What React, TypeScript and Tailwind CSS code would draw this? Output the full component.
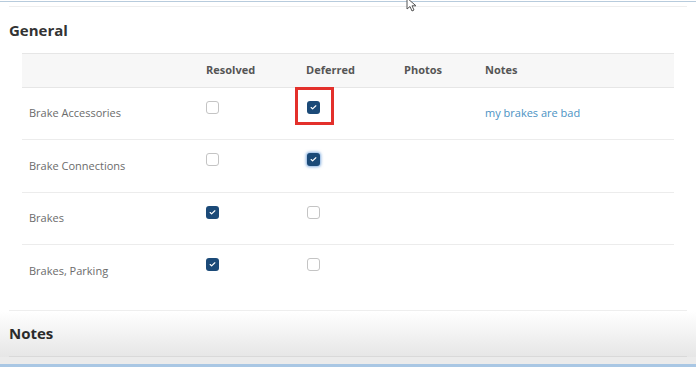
import { Check } from 'lucide-react';

type Row = {
  name: string;
  resolved: boolean;
  deferred: boolean;
  note?: string;
  focus?: boolean;
  marked?: boolean;
  h: string;
};

const rows: Row[] = [
  { name: 'Brake Accessories', resolved: false, deferred: true, note: 'my brakes are bad', marked: true, h: 'h-[52px]' },
  { name: 'Brake Connections', resolved: false, deferred: true, focus: true, h: 'h-[53px]' },
  { name: 'Brakes', resolved: true, deferred: false, h: 'h-[52px]' },
  { name: 'Brakes, Parking', resolved: true, deferred: false, h: 'h-[52px]' },
];

function Box({ checked, focus }: { checked: boolean; focus?: boolean }) {
  if (checked) {
    return (
      <div
        className={`w-[13px] h-[13px] rounded-[3px] bg-[#1b4a78] flex items-center justify-center ${
          focus ? 'shadow-[0_0_3px_1px_rgba(80,140,210,0.7)]' : ''
        }`}
      >
        <Check className="w-[7px] h-[7px] text-white" strokeWidth={4} />
      </div>
    );
  }
  return <div className="w-[13px] h-[13px] rounded-[3px] border border-[#c4c4c4] bg-white" />;
}

export default function App() {
  return (
    <div
      className="relative w-[696px] h-[367px] overflow-hidden bg-white flex flex-col"
      style={{ fontFamily: '"Open Sans", "Liberation Sans", sans-serif' }}
    >
      <div className="mt-px h-[1px] bg-[#b7cbdc]" />

      <div className="mx-[9px] mt-[4px] border-t border-[#eeeeee] border-b pb-[13px]">
        <h2 className="pt-[13px] text-[15px] leading-[20px] font-bold text-[#333]">General</h2>

        <div className="ml-[13px] mr-[13px] mt-[13px]">
          <div className="grid grid-cols-[177px_100px_98px_81px_1fr] h-[35px] items-center bg-[#f7f7f7] border-y border-[#e6e6e6] text-[11px] font-bold text-[#555]">
            <div />
            <div className="pl-[7px]">Resolved</div>
            <div className="pl-[7px]">Deferred</div>
            <div className="pl-[7px]">Photos</div>
            <div className="pl-[7px]">Notes</div>
          </div>

          {rows.map((r, i) => (
            <div
              key={r.name}
              className={`grid grid-cols-[177px_100px_98px_81px_1fr] ${r.h} text-[11px] ${
                i < rows.length - 1 ? 'border-b border-[#ececec]' : ''
              }`}
            >
              <div className="pl-[7px] flex items-center text-[#6b6b6b]">{r.name}</div>
              <div className="pl-[7px] pt-[13px]">
                <Box checked={r.resolved} />
              </div>
              <div className="pl-[8px] pt-[13px] relative">
                <Box checked={r.deferred} focus={r.focus} />
                {r.marked && (
                  <div className="absolute left-[-4px] top-[-1px] w-[39px] h-[38px] border-[3px] border-[#e3302b]" />
                )}
              </div>
              <div />
              <div className="pl-[7px] flex items-center text-[#4b92c3]">{r.note}</div>
            </div>
          ))}
        </div>
      </div>

      <div className="h-[46px] bg-gradient-to-b from-white to-[#e6e6e6] px-[9px]">
        <div className="h-full border-b border-[#d9d9d9] flex items-center">
          <h2 className="text-[15px] font-bold text-[#2b2b2b]">Notes</h2>
        </div>
      </div>
      <div className="flex-1 bg-[#ebebeb]" />
      <div className="h-[3px] bg-[#a9c7e4]" />

      <svg className="absolute left-[406px] top-[-3px]" width="12" height="16" viewBox="0 0 12 16">
        <path d="M1 1 L1 12 L4 9.5 L6 14 L8 13 L6 8.8 L10 8.8 Z" fill="white" stroke="#555" strokeWidth="1" />
      </svg>
    </div>
  );
}
